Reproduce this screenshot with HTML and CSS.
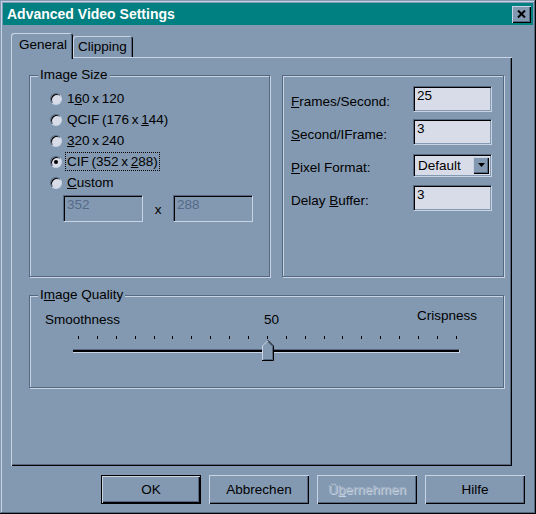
FILE: index.html
```html
<!DOCTYPE html>
<html>
<head>
<meta charset="utf-8">
<title>Advanced Video Settings</title>
<link rel="stylesheet" href="styles.css">
</head>
<body>
<div class="window">
  <div class="titlebar">
    <span class="title">Advanced Video Settings</span>
    <span class="close"><svg width="9" height="8" viewBox="0 0 9 8"><path d="M1 0.5 L8 7.5 M8 0.5 L1 7.5" stroke="#000" stroke-width="2" fill="none"/></svg></span>
  </div>
  <div class="tabs">
    <div class="tab active">General</div>
    <div class="tab">Clipping</div>
  </div>
  <div class="panel">
    <div class="top-row">
      <div class="group size-group">
        <span class="legend">Image Size</span>
        <div class="radios">
          <div class="radio-row"><span class="radio"></span><span class="rlabel">1<u>6</u>0 x 120</span></div>
          <div class="radio-row"><span class="radio"></span><span class="rlabel">QCIF (176 x <u>1</u>44)</span></div>
          <div class="radio-row"><span class="radio"></span><span class="rlabel"><u>3</u>20 x 240</span></div>
          <div class="radio-row"><span class="radio checked"></span><span class="rlabel focus">CIF (352 x <u>2</u>88)</span></div>
          <div class="radio-row"><span class="radio"></span><span class="rlabel"><u>C</u>ustom</span></div>
        </div>
        <div class="custom-row">
          <div class="edit disabled">352</div>
          <span class="times">x</span>
          <div class="edit disabled">288</div>
        </div>
      </div>
      <div class="group params-group">
        <div class="param-row"><span class="plabel"><u>F</u>rames/Second:</span><div class="edit">25</div></div>
        <div class="param-row"><span class="plabel"><u>S</u>econd/IFrame:</span><div class="edit">3</div></div>
        <div class="param-row"><span class="plabel"><u>P</u>ixel Format:</span>
          <div class="combo"><span class="combo-text">Default</span><span class="combo-btn"><svg width="7" height="4" viewBox="0 0 7 4"><path d="M0 0H7L3.5 4Z" fill="#000"/></svg></span></div>
        </div>
        <div class="param-row"><span class="plabel">Delay <u>B</u>uffer:</span><div class="edit">3</div></div>
      </div>
    </div>
    <div class="group quality-group">
      <span class="legend">I<u>m</u>age Quality</span>
      <div class="scale-labels">
        <span class="low">Smoothness</span>
        <span class="value">50</span>
        <span class="high">Crispness</span>
      </div>
      <div class="ticks">
        <i></i><i></i><i></i><i></i><i></i><i></i><i></i><i></i><i></i><i></i><i></i><i></i><i></i><i></i><i></i><i></i><i></i><i></i><i></i><i></i><i></i>
      </div>
      <div class="track">
        <svg class="thumb" width="12" height="21" viewBox="0 0 12 21">
          <path d="M0.5 20.5 V6 L6 0.5 L11.5 6 V20.5 Z" fill="#8399b1"/>
          <path d="M0.5 20 V6 L5.5 1" stroke="#c8d4e3" fill="none"/>
          <path d="M6 0.5 L11.5 6 V20.5 H0" stroke="#000" fill="none"/>
          <path d="M6 2 L10.5 6.5 V19.5 H1.5" stroke="#56687f" fill="none"/>
        </svg>
      </div>
    </div>
  </div>
  <div class="buttons">
    <div class="btn default">OK</div>
    <div class="btn">Abbrechen</div>
    <div class="btn disabled">Ü<u>b</u>ernehmen</div>
    <div class="btn">Hilfe</div>
  </div>
</div>
</body>
</html>
```
FILE: styles.css
```css
:root {
  --face: #8399b1;
  --light: #c8d4e3;
  --shadow: #56687f;
  --field: #d8dce8;
}
* { box-sizing: border-box; }
body {
  margin: 0;
  background: var(--face);
  font-family: "Liberation Sans", Arial, sans-serif;
  font-size: 13.5px;
  color: #000;
}
u { text-decoration: underline; text-underline-offset: 1px; }

.window {
  width: 536px;
  height: 514px;
  padding: 3px;
  background: var(--face);
  box-shadow: inset -1px -1px 0 #000, inset 1px 1px 0 var(--face), inset -2px -2px 0 var(--shadow), inset 2px 2px 0 var(--light);
  display: flex;
  flex-direction: column;
}

.titlebar {
  height: 22px;
  background: #008080;
  display: flex;
  align-items: center;
  justify-content: space-between;
  padding: 0 2px 0 4px;
}
.title {
  color: #fff;
  font-weight: bold;
  font-size: 14px;
}
.close {
  width: 19px;
  height: 17px;
  background: var(--face);
  box-shadow: inset 1px 1px 0 var(--light), inset -1px -1px 0 #000, inset -2px -2px 0 var(--shadow);
  display: flex;
  align-items: center;
  justify-content: center;
  padding-bottom: 1px;
}

.tabs {
  margin-top: 8px;
  height: 24px;
  padding-left: 8px;
  display: flex;
  align-items: flex-end;
}
.tab {
  height: 21px;
  padding: 2px 6px 0 6px;
  background: var(--face);
  border-radius: 3px 3px 0 0;
  box-shadow: inset 1px 1px 0 var(--light), inset -1px 0 0 #000, inset -2px 0 0 var(--shadow);
  line-height: 17px;
}
.tab.active {
  height: 26px;
  margin-bottom: -2px;
  padding: 3px 8px 0 8px;
  position: relative;
  z-index: 1;
  width: 62px;
}
.tab:not(.active) {
  width: 60px;
  padding-left: 5px;
}

.panel {
  margin-left: 8px;
  width: 501px;
  height: 409px;
  box-shadow: inset 1px 1px 0 var(--light), inset -1px -1px 0 #000, inset -2px -2px 0 var(--shadow);
  padding: 18px 8px 0 18px;
}

.top-row {
  display: flex;
  gap: 12px;
  height: 203px;
}
.group {
  position: relative;
  border: 1px solid var(--shadow);
  box-shadow: 1px 1px 0 var(--light), inset 1px 1px 0 var(--light);
}
.legend {
  position: absolute;
  top: -9px;
  left: 8px;
  padding: 0 2px;
  background: var(--face);
  line-height: 16px;
}
.size-group {
  width: 241px;
  height: 202px;
  padding: 12px 0 0 20px;
}
.radio-row {
  height: 21px;
  display: flex;
  align-items: center;
  gap: 5px;
}
.rlabel {
  line-height: 16px;
  word-spacing: -1px;
}
.rlabel.focus {
  outline: 1px dotted #000;
  padding: 1px 1px 0 1px;
  margin-left: -1px;
}
.radio {
  width: 12px;
  height: 12px;
  border-radius: 50%;
  background: var(--field);
  border: 1px solid;
  border-color: var(--shadow) var(--light) var(--light) var(--shadow);
  box-shadow: inset 1px 1px 0 #000;
  display: flex;
  align-items: center;
  justify-content: center;
}
.radio.checked::after {
  content: "";
  width: 4px;
  height: 4px;
  border-radius: 50%;
  background: #000;
}
.custom-row {
  margin: 2px 0 0 13px;
  display: flex;
  align-items: center;
}
.times {
  width: 30px;
  text-align: center;
  padding-top: 2px;
}

.edit {
  width: 79px;
  height: 26px;
  background: var(--field);
  border: 1px solid;
  border-color: var(--shadow) var(--light) var(--light) var(--shadow);
  box-shadow: inset 1px 1px 0 #000, inset -1px -1px 0 var(--face);
  padding: 1px 3px;
  line-height: 16px;
}
.edit.disabled {
  width: 80px;
  height: 27px;
  background: var(--face);
  color: #55698a;
}

.params-group {
  flex: 1;
  height: 202px;
  padding: 10px 11px 0 8px;
}
.param-row {
  height: 26px;
  margin-bottom: 7px;
  display: flex;
  align-items: center;
  justify-content: space-between;
}
.plabel {
  padding-top: 5px;
  line-height: 16px;
}
.combo {
  width: 79px;
  height: 23px;
  background: var(--field);
  border: 1px solid;
  border-color: var(--shadow) var(--light) var(--light) var(--shadow);
  box-shadow: inset 1px 1px 0 #000, inset -1px -1px 0 var(--face);
  display: flex;
  align-items: center;
  justify-content: space-between;
  padding: 2px 2px 2px 4px;
}
.combo-btn {
  width: 16px;
  height: 17px;
  background: var(--face);
  box-shadow: inset 1px 1px 0 var(--light), inset -1px -1px 0 #000, inset -2px -2px 0 var(--shadow);
  display: flex;
  align-items: center;
  justify-content: center;
  padding-bottom: 1px;
}

.quality-group {
  margin-top: 17px;
  height: 93px;
  padding: 12px 26px 0 15px;
}
.scale-labels {
  height: 20px;
  display: flex;
  justify-content: space-between;
  line-height: 16px;
}
.scale-labels .low,
.scale-labels .value { align-self: flex-end; }
.scale-labels .value { padding-left: 6px; }
.scale-labels .high { align-self: flex-start; }
.ticks {
  margin: 8px 0 0 33px;
  width: 379px;
  height: 3px;
  display: flex;
  justify-content: space-between;
}
.ticks i {
  width: 1px;
  height: 3px;
  background: #000;
}
.track {
  position: relative;
  margin: 10px 0 0 28px;
  width: 387px;
  height: 4px;
  border-top: 1px solid var(--shadow);
  border-bottom: 1px solid var(--light);
  border-right: 1px solid var(--light);
  background: #000;
}
.thumb {
  position: absolute;
  left: 189px;
  top: -10px;
}

.buttons {
  margin-top: 9px;
  padding-right: 8px;
  display: flex;
  justify-content: flex-end;
  gap: 8px;
}
.btn {
  width: 100px;
  height: 29px;
  display: flex;
  align-items: center;
  justify-content: center;
  box-shadow: inset 1px 1px 0 var(--light), inset -1px -1px 0 #000, inset -2px -2px 0 var(--shadow);
}
.btn.default {
  border: 1px solid #000;
}
.btn.disabled {
  color: #a2b2c6;
  text-shadow: 1px 1px 0 #c6d1df;
}
```
